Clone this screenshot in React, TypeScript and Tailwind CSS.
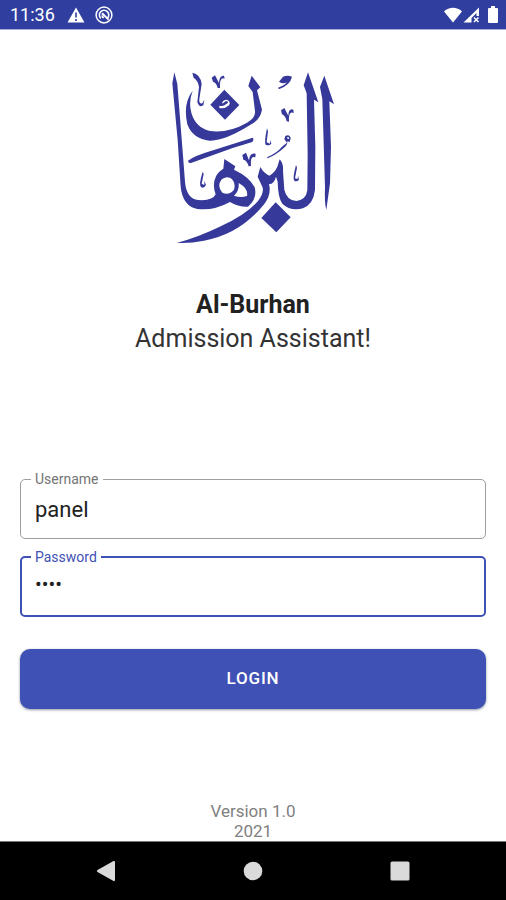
import { useState } from 'react';

function StatusBar() {
  return (
    <header className="flex h-[30px] items-center justify-between border-b border-[#a9aed8] bg-[#303f9f] pr-2 pl-[10px] text-white">
      <div className="flex items-center gap-3">
        <span className="text-[18px] leading-5">11:36</span>
        <svg viewBox="0 0 18 16" className="h-4 w-[18px]" aria-hidden="true">
          <path d="M9 0.5 17.5 15.5H0.5Z" fill="#fff" />
          <path d="M9 5.5v5M9 12v2" stroke="#303f9f" strokeWidth="1.6" />
        </svg>
        <svg viewBox="0 0 18 18" className="-ml-[2px] h-[18px] w-[18px]" fill="none" stroke="#fff" aria-hidden="true">
          <circle cx="9" cy="9" r="7.9" strokeWidth="1.5" />
          <path d="M5.8 12.4A4.7 4.7 0 1 1 12.4 12.3" strokeWidth="1.6" />
          <path d="M7 7.2 13.6 13.6" strokeWidth="1.9" />
          <path d="M6.800 9.400A2.300 2.300 0 0 0 9 11.500" strokeWidth="1.4" />
        </svg>
      </div>
      <div className="flex items-center">
        <svg viewBox="0 0 20 16" className="h-4 w-5" aria-hidden="true">
          <path d="M10 15.5 1 4.5C6-.5 14-.5 19 4.5Z" fill="#fff" />
        </svg>
        <svg viewBox="0 0 17 16" className="h-4 w-[17px]" aria-hidden="true">
          <path fillRule="evenodd" d="M0.5 15.5 16 0.5V9h-2.500V6L8.500 11v4.5Z" fill="#fff" />
          <path d="m11 10.5 4.5 4.5m0-4.5L11 15" stroke="#fff" strokeWidth="1.5" />
        </svg>
        <svg viewBox="0 0 10 17" className="ml-2 h-[17px] w-[10px]" aria-hidden="true">
          <path d="M3 0h4v2h2q1 0 1 1v13q0 1-1 1H1q-1 0-1-1V3q0-1 1-1h2Z" fill="#fff" />
        </svg>
      </div>
    </header>
  );
}

function Logo() {
  return (
    <svg viewBox="9 0 522 570" className="h-[190px] w-[174px]" role="img" aria-label="Al-Burhan logo">
      <g fill="#36389a" transform="translate(0 0)">
        {/* left stem, base line and the looped body */}
        <path
          fillRule="evenodd"
          d="M40 37 49 72 67 300 72 365Q76 416 112 420Q155 423 164 403Q153 374 165 349Q171 336 187 326L190 297 223 319 219 329Q266 351 281 382Q290 416 261 440Q231 441 207 426Q157 453 109 447Q65 438 59 380L50 240 34 70ZM181 359Q167 379 184 398Q205 407 219 389Q226 365 207 353Q192 348 181 359ZM233 369Q235 394 219 407Q239 415 258 408Q263 386 233 369Z"
        />
        {/* upper bowl */}
        <path d="M95 92Q82 125 91 158Q103 202 147 213Q202 220 258 188Q284 174 282 154L275 96 262 78 272 47 298 82 288 91 303 149Q298 178 271 193Q190 244 146 242Q95 237 79 193Q65 130 95 92Z" />
        <path d="M81 302Q105 286 147 274L275 233Q280 236 274 246Q250 253 215 264L90 309Q82 311 81 302Z" />
        {/* long sweep */}
        <path d="M298 321Q309 341 325 347Q341 338 349 320L356 298Q368 310 366 333L370 389Q377 421 406 423Q435 420 439 391L440 285 437 100 428 76 441 37 472 127 459 119 463 260 462 390Q457 433 426 445Q389 455 364 431Q351 414 350 365L345 350Q339 373 324 372Q332 404 310 432Q237 523 129 542Q88 551 47 549Q117 529 176 500Q255 465 291 423Q311 397 304 380L290 350Z" />
        {/* right stem */}
        <path d="M490 47 519 133 505 124 510 260 507 370 496 449Q490 430 492 380L484 118 477 81Z" />
        <path d="M344 427 389 472 346 517 301 474Z" />
        <path fillRule="evenodd" d="M190 89 235 135 192 179 148 134ZM175 137Q187 140 196 132Q207 125 195 123L184 131Q182 121 197 119Q211 125 204 136Q191 148 175 144Z" />
        {/* small marks */}
        <path d="M366 50Q379 45 393 50Q388 74 355 87L350 84Q371 76 378 67Q366 73 354 65Z" />
        <path d="M94 38Q118 42 122 72L115 117Q113 132 124 130L130 119 127 136Q114 144 109 126L114 81Q112 63 98 53Z" />
        <path d="M152 53 162 46 174 69Q175 46 189 47L191 56Q175 50 177 84L170 84Q166 67 156 65Z" />
        <path d="M360 151 370 144 382 167Q383 144 397 149L398 159Q382 151 384 185L377 184Q374 168 363 163Z" />
        <path d="M244 285 255 278 264 301Q266 276 284 281L283 292Q267 285 270 318L263 319Q257 299 247 299Z" />
        <path d="M318 205 321 214 317 247 327 251 328 239 331 251Q324 259 314 254Q309 248 318 205Z" />
        <path d="M125 335 128 342 122 371 130 375 130 363 135 375Q129 386 121 382Q112 376 125 335Z" />
        <path d="M405 315 408 323 402 355 410 357 411 347 414 359Q406 367 400 362Q394 355 405 315Z" />
        <path fillRule="evenodd" d="M373 228Q386 222 389 235L386 246 379 244Q380 256 369 263Q346 284 320 295L318 292Q350 277 363 260L378 248 370 238ZM378 232 380 237 384 237 383 231Z" />
      </g>
    </svg>
  );
}

export default function App() {
  const [username, setUsername] = useState('panel');
  const [password, setPassword] = useState('1234');

  return (
    <div className="flex min-h-screen flex-col bg-white font-['Roboto',sans-serif] text-[#212121]">
      <StatusBar />

      <main className="flex flex-1 flex-col px-5 pt-[30px]">
        <div className="flex justify-center pr-1">
          <Logo />
        </div>

        <h1 className="mt-[38px] text-center text-[25px] leading-[34px] font-bold">Al-Burhan</h1>
        <p className="text-center text-[25px] leading-[34px] text-[#333333]">Admission Assistant!</p>

        <form className="mt-[113px]" onSubmit={(e) => e.preventDefault()}>
          <fieldset className="h-[70px] rounded-[5px] border border-[#9e9e9e] px-[10px]">
            <legend className="px-1 text-[14px] leading-5 text-[#757575]">
              <label htmlFor="username">Username</label>
            </legend>
            <input
              id="username"
              type="text"
              value={username}
              onChange={(e) => setUsername(e.target.value)}
              className="h-10 w-full px-1 text-[22px] outline-none"
            />
          </fieldset>
          <fieldset className="mt-2 h-[70px] rounded-[5px] border-2 border-[#3f51b5] px-[9px]">
            <legend className="px-1 text-[14px] leading-5 text-[#3f51b5]">
              <label htmlFor="password">Password</label>
            </legend>
            <input
              id="password"
              type="password"
              value={password}
              onChange={(e) => setPassword(e.target.value)}
              className="h-[34px] w-full px-1 text-[20px] outline-none"
            />
          </fieldset>
          <button
            type="submit"
            className="mt-8 h-[60px] w-full rounded-[10px] bg-[#3f51b5] text-[17px] font-medium tracking-wider text-white shadow-sm shadow-gray-400"
          >
            LOGIN
          </button>
        </form>

        <footer className="mt-auto text-center text-[17px] leading-5 text-[#808080]">
          <p>Version 1.0</p>
          <p>2021</p>
        </footer>
      </main>

      <nav className="flex h-[59px] items-center justify-around border-t border-[#777777] bg-black px-8 text-[#dadada]">
        <button type="button" aria-label="Back">
          <svg viewBox="0 0 20 22" className="h-[22px] w-5" fill="currentColor">
            <path d="M1.5 10 17.5 1Q19 .5 19 2v18q0 1.500-1.500 1L1.500 12Q0 11 1.500 10Z" />
          </svg>
        </button>
        <button type="button" aria-label="Home">
          <svg viewBox="0 0 20 20" className="h-5 w-5" fill="currentColor">
            <circle cx="10" cy="10" r="9.300" />
          </svg>
        </button>
        <button type="button" aria-label="Recent apps">
          <svg viewBox="0 0 20 20" className="h-5 w-5" fill="currentColor">
            <rect x="0.500" y="0.500" width="19" height="19" rx="1.500" />
          </svg>
        </button>
      </nav>
    </div>
  );
}
